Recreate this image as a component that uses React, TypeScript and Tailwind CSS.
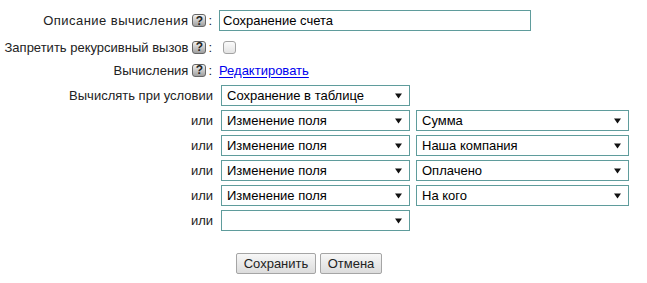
import React from "react";

function Help() {
  return (
    <span className="inline-flex items-center justify-center w-[14px] h-[13px] rounded-[3px] border border-[#666] bg-gradient-to-b from-[#f4f4f4] to-[#9f9f9f] text-[12px] font-bold text-[#222] leading-none">
      ?
    </span>
  );
}

function Arrow() {
  return (
    <svg width="7" height="6" viewBox="0 0 7 6" className="shrink-0">
      <path d="M0 0.5 H7 L3.5 5.5 Z" fill="#111" />
    </svg>
  );
}

function Select({ value, width }: { value: string; width: string }) {
  return (
    <div
      className={`flex items-center justify-between h-[21px] border border-[#5f9c9c] bg-white pl-[5px] pr-[7px] text-black ${width}`}
    >
      <span>{value}</span>
      <Arrow />
    </div>
  );
}

const rows: { left: string; right: string | null }[] = [
  { left: "Изменение поля", right: "Сумма" },
  { left: "Изменение поля", right: "Наша компания" },
  { left: "Изменение поля", right: "Оплачено" },
  { left: "Изменение поля", right: "На кого" },
  { left: "", right: null },
];

export default function App() {
  return (
    <div className="w-[647px] h-[283px] bg-white font-['Liberation_Sans',Arial,sans-serif] text-[13px] text-[#222] leading-none overflow-hidden">
      <div className="pt-[10px]">
        <div className="flex items-center h-[21px]">
          <div className="w-[212px] flex justify-end items-center gap-[4px]">
            <span className="tracking-[0.45px]">Описание вычисления</span>
            <span className="flex items-center gap-[2px]">
              <Help />
              <span>:</span>
            </span>
          </div>
          <div className="ml-[7px] w-[312px] h-[21px] border border-[#5f9c9c] flex items-center pl-[3px] text-black">
            Сохранение счета
          </div>
        </div>
        <div className="flex items-center h-[20px] mt-[6px]">
          <div className="w-[212px] flex justify-end items-center gap-[4px]">
            <span>Запретить рекурсивный вызов</span>
            <span className="flex items-center gap-[2px]">
              <Help />
              <span>:</span>
            </span>
          </div>
          <span className="ml-[11px] w-[13px] h-[13px] rounded-[3px] border border-[#a3a3a3] bg-gradient-to-b from-[#fbfbfb] to-[#e3e3e3]" />
        </div>
        <div className="flex items-center h-[20px] mt-[3px]">
          <div className="w-[212px] flex justify-end items-center gap-[4px]">
            <span>Вычисления</span>
            <span className="flex items-center gap-[2px]">
              <Help />
              <span>:</span>
            </span>
          </div>
          <a className="ml-[7px] text-[#0000ee] underline underline-offset-[2px] cursor-pointer">
            Редактировать
          </a>
        </div>
      </div>
      <div className="mt-[5px]">
        <div className="flex items-center">
          <div className="w-[213px] text-right">Вычислять при условии</div>
          <div className="ml-[8px]">
            <Select value="Сохранение в таблице" width="w-[189px]" />
          </div>
        </div>
        {rows.map((r, i) => (
          <div key={i} className="flex items-center mt-[4px]">
            <div className="w-[213px] text-right">или</div>
            <div className="ml-[8px]">
              <Select value={r.left} width="w-[189px]" />
            </div>
            {r.right !== null && (
              <div className="ml-[6px]">
                <Select value={r.right} width="w-[213px]" />
              </div>
            )}
          </div>
        ))}
      </div>
      <div className="mt-[22px] pl-[236px] flex gap-[4px]">
        <button className="h-[21px] w-[80px] rounded-[2px] border border-[#a5a5a5] bg-gradient-to-b from-[#f7f7f7] to-[#dcdcdc] text-[13px] text-[#222] leading-none">
          Сохранить
        </button>
        <button className="h-[21px] w-[62px] rounded-[2px] border border-[#a5a5a5] bg-gradient-to-b from-[#f7f7f7] to-[#dcdcdc] text-[13px] text-[#222] leading-none">
          Отмена
        </button>
      </div>
    </div>
  );
}
